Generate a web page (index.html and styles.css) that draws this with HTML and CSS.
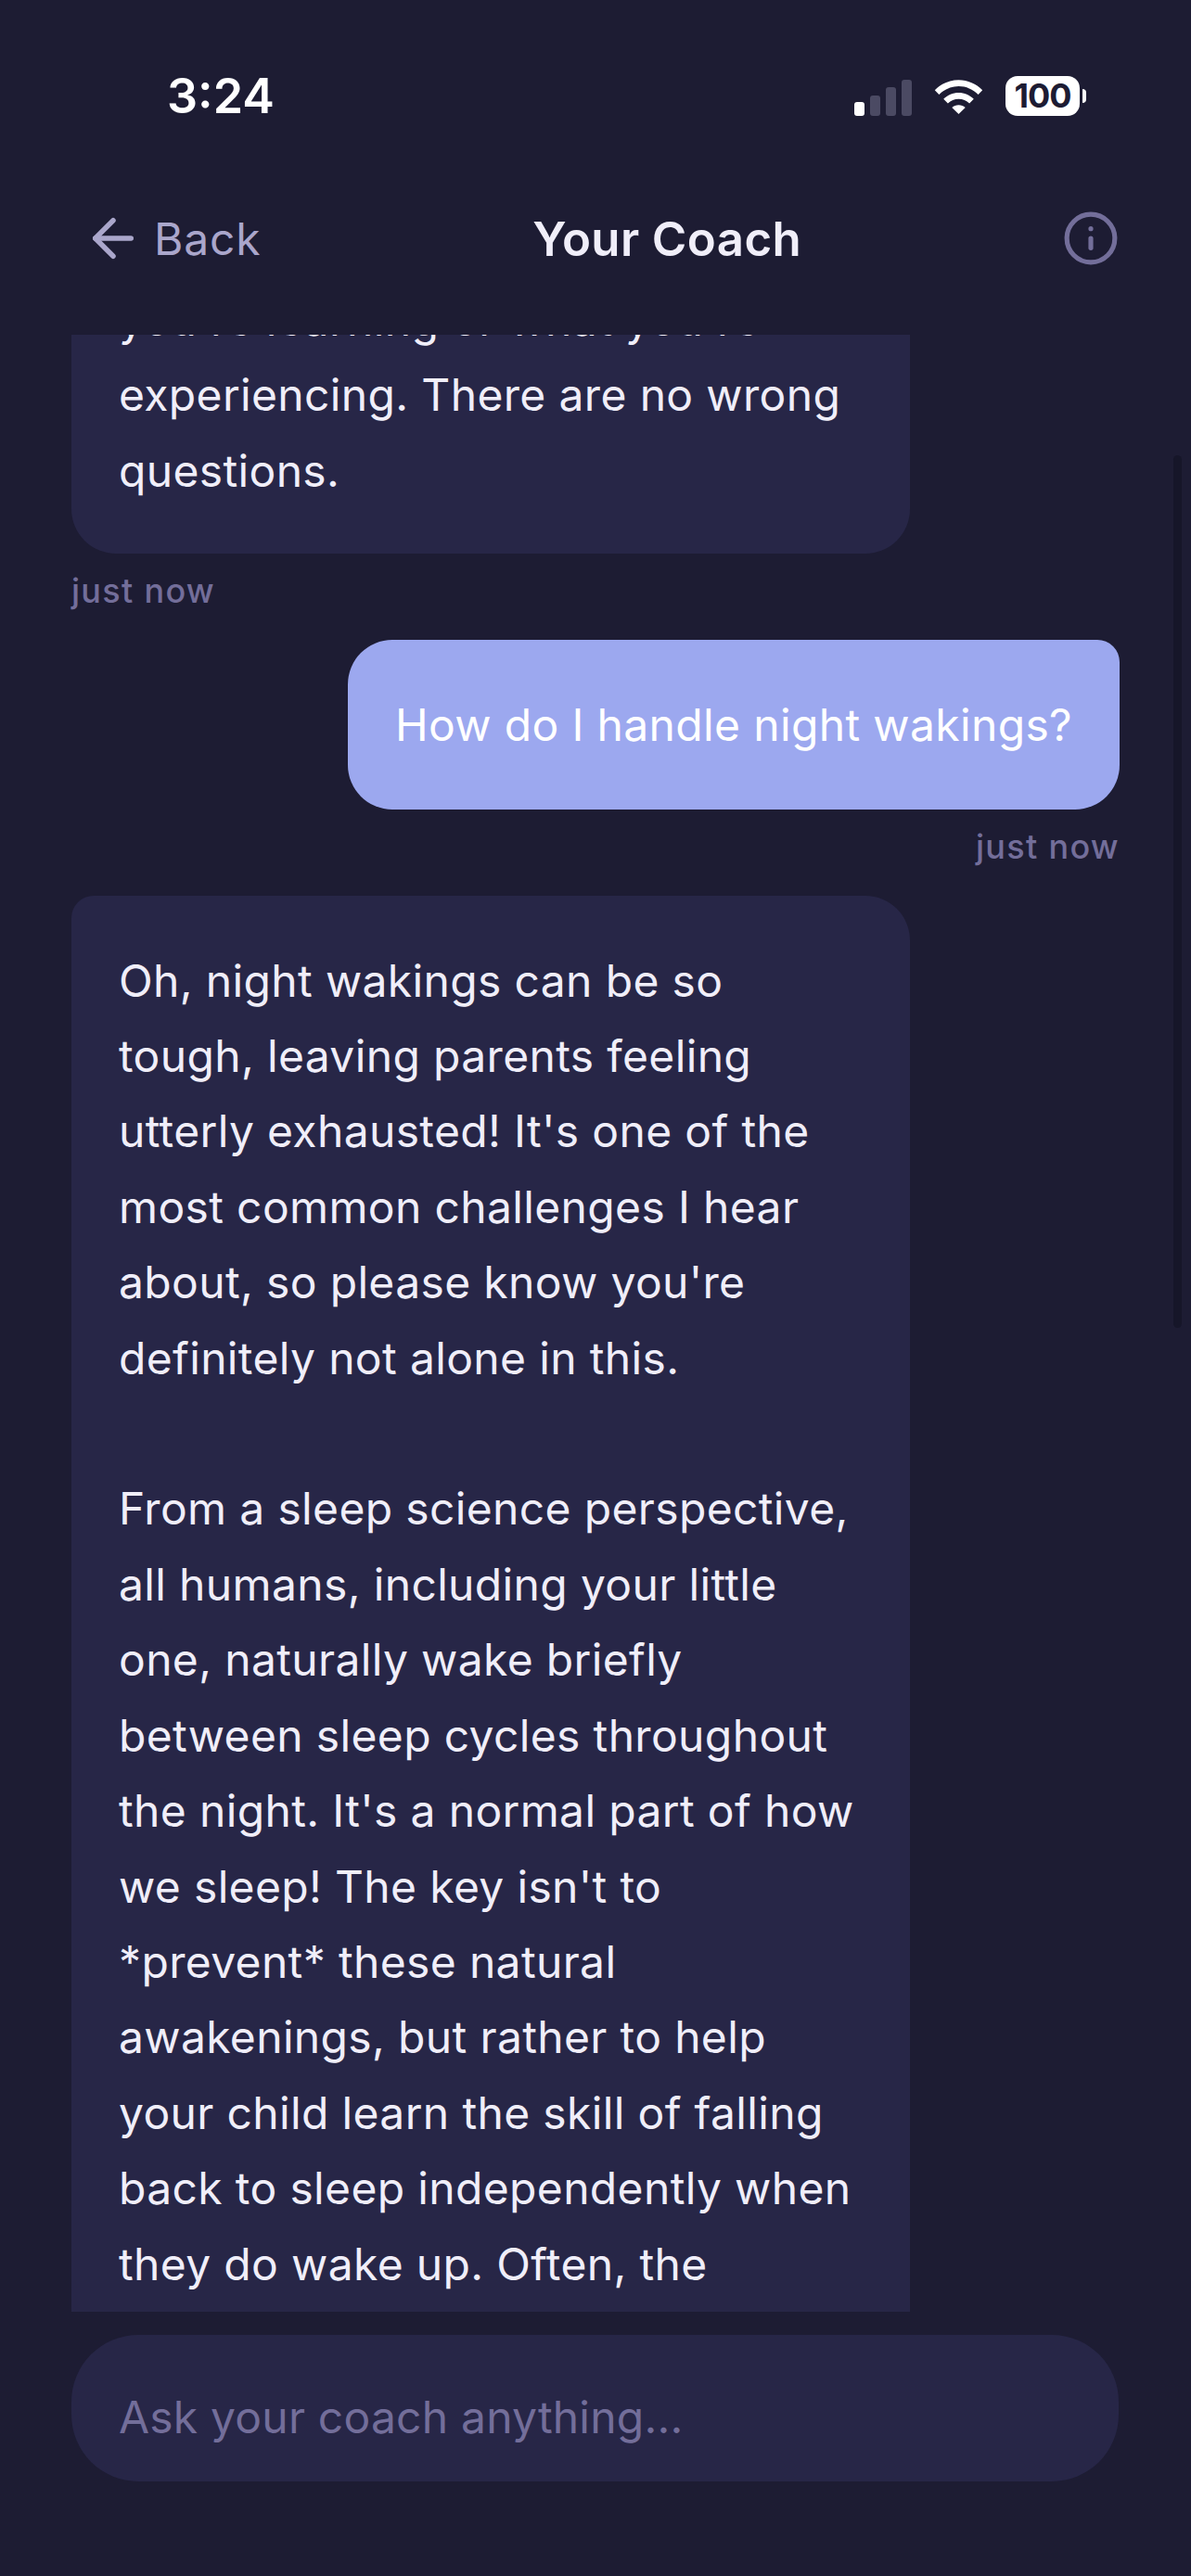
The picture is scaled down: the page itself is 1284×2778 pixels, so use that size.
FILE: index.html
```html
<!DOCTYPE html>
<html lang="en">
<head>
<meta charset="utf-8">
<title>Your Coach</title>
<link rel="stylesheet" href="styles.css">
</head>
<body>
<div class="screen">
  <div class="status">
    <span class="time">3:24</span>
    <div class="status-right">
      <div class="signal">
        <i class="bar b1"></i><i class="bar b2"></i><i class="bar b3"></i><i class="bar b4"></i>
      </div>
      <svg class="wifi" viewBox="0 0 53 39" aria-hidden="true">
        <path d="M0.8 13.2C7.6 6.2 16.6 2.2 26.5 2.2S45.4 6.2 52.2 13.2L47.6 18C42 12.2 34.6 8.9 26.5 8.9S11 12.2 5.4 18Z"/>
        <path d="M10.2 22.8C14.6 18.4 20.3 15.9 26.5 15.9S38.4 18.4 42.8 22.8L38.1 27.6C35 24.5 31 22.7 26.5 22.7S18 24.5 14.9 27.6Z"/>
        <path d="M19.3 32C21.3 30.2 23.8 29.2 26.5 29.2S31.7 30.2 33.7 32L26.5 39Z"/>
      </svg>
      <div class="battery"><span class="battery-body">100</span><i class="battery-nub"></i></div>
    </div>
  </div>
  <header class="header">
    <div class="back">
      <svg class="back-icon" viewBox="0 0 24 24" aria-hidden="true"><line x1="19" y1="12" x2="5" y2="12"/><polyline points="12 19 5 12 12 5"/></svg>
      <span>Back</span>
    </div>
    <h1 class="title">Your Coach</h1>
    <svg class="info-icon" viewBox="0 0 24 24" aria-hidden="true"><circle cx="12" cy="12" r="10"/><line x1="12" y1="16" x2="12" y2="12"/><line x1="12" y1="8" x2="12.01" y2="8"/></svg>
  </header>
  <main class="messages">
    <div class="msg coach scrolled">
      <div class="bubble">you're learning or what you're experiencing. There are no wrong questions.</div>
      <div class="ts">just now</div>
    </div>
    <div class="msg user">
      <div class="bubble">How do I handle night wakings?</div>
      <div class="ts">just now</div>
    </div>
    <div class="msg coach">
      <div class="bubble cut">Oh, night wakings can be so tough, leaving parents feeling utterly exhausted! It's one of the most common challenges I hear about, so please know you're definitely not alone in this.<br><br>From a sleep science perspective, all humans, including your little one, naturally wake briefly between sleep cycles throughout the night. It's a normal part of how we sleep! The key isn't to *prevent* these natural awakenings, but rather to help your child learn the skill of falling back to sleep independently when they do wake up. Often, the</div>
    </div>
    <div class="scrollbar"></div>
  </main>
  <div class="composer">
    <div class="input">Ask your coach anything...</div>
  </div>
</div>
</body>
</html>
```
FILE: styles.css
```css
* { box-sizing: border-box; }
html, body { margin: 0; padding: 0; }
body { background: #1d1c33; font-family: Inter, "Noto Sans", sans-serif; }
.screen { width: 1284px; height: 2778px; display: flex; flex-direction: column; overflow: hidden; background: #1d1c33; }

.status { height: 153px; flex: none; display: flex; justify-content: space-between; padding: 82px 113px 0 180px; }
.time { font-size: 52px; font-weight: 600; line-height: 44px; color: #fff; }
.status-right { display: flex; align-items: flex-start; height: 44px; }
.signal { display: flex; align-items: flex-end; gap: 6px; height: 41px; margin: 2px 24px 0 0; }
.bar { display: block; width: 11px; border-radius: 3px; background: #4b4a63; }
.b1 { height: 15px; background: #fff; }
.b2 { height: 22px; }
.b3 { height: 31px; }
.b4 { height: 39px; }
.wifi { width: 53px; height: 39px; margin: 2px 24px 0 0; fill: #fff; }
.battery { display: flex; align-items: center; gap: 3px; }
.battery-body { width: 80px; height: 43px; border-radius: 13px; background: #fff; color: #1d1c33; font-size: 36px; font-weight: 700; line-height: 43px; text-align: center; letter-spacing: -1px; }
.battery-nub { display: block; width: 4px; height: 15px; border-radius: 0 8px 8px 0; background: #fff; }

.header { height: 208px; flex: none; display: flex; justify-content: space-between; align-items: center; padding: 0 77px 0 89px; }
.back { display: flex; align-items: center; gap: 11px; padding-right: 12px; color: #aaa6cb; font-size: 48px; letter-spacing: 0.8px; }
.back-icon { width: 66px; height: 66px; fill: none; stroke: #aaa6cb; stroke-width: 2; stroke-linecap: round; stroke-linejoin: round; }
.title { margin: 0; font-size: 51px; font-weight: 600; letter-spacing: 0.4px; color: #f0eef9; }
.info-icon { width: 62px; height: 62px; fill: none; stroke: #736e9a; stroke-width: 2; stroke-linecap: round; stroke-linejoin: round; }

.messages { position: relative; flex: 1; min-height: 0; overflow: hidden; padding: 0 77px; display: flex; flex-direction: column; }
.msg { display: flex; flex-direction: column; flex: none; margin-bottom: 30.5px; }
.msg.scrolled { margin-top: -108px; }
.msg.scrolled .bubble { padding-bottom: 49px; }
.msg.user { align-items: flex-end; }
.bubble { max-width: 80%; padding: 51px; font-size: 48px; line-height: 81.4px; letter-spacing: 0.35px; color: #f0eef9; background: #272647; border-radius: 24px 48px 48px 48px; align-self: flex-start; }
.user .bubble { align-self: flex-end; background: #9ca8ef; color: #fff; border-radius: 48px 24px 48px 48px; }
.bubble.cut { padding-bottom: 200px; }
.ts { margin-top: 18px; font-size: 36px; font-weight: 500; line-height: 44px; letter-spacing: 1.3px; color: #736e9a; }
.scrollbar { position: absolute; top: 130px; right: 10px; width: 9px; height: 941px; border-radius: 5px; background: #161629; }

.composer { flex: none; height: 285px; padding: 25px 78px 0 77px; }
.input { height: 158px; border-radius: 72px; background: #272647; color: #736e9a; font-size: 48px; letter-spacing: 0.2px; padding: 60px 51px 0; line-height: 58px; }
```
